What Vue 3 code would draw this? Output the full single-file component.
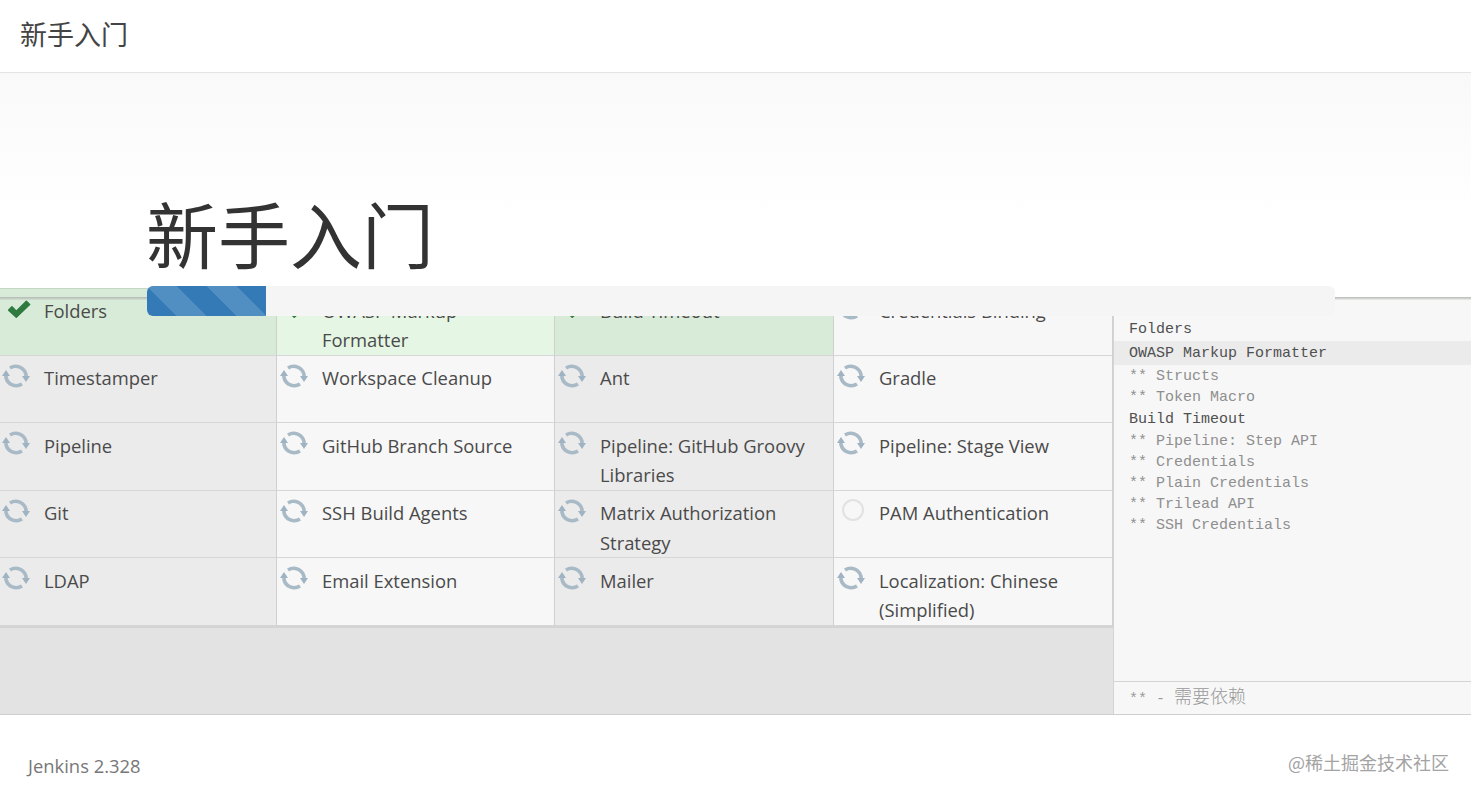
<template>
  <div class="page">
    <header class="top-bar">新手入门</header>
    <section class="hero">
      <h1>新手入门</h1>
    </section>

    <div class="install">
      <div class="plugin-pane">
        <div class="plugin-grid">
          <div
            v-for="(plugin, i) in plugins"
            :key="plugin.name"
            class="plugin"
            :class="[i % 2 ? 'plugin--even' : 'plugin--odd', plugin.state === 'done' ? 'plugin--done' : '']"
          >
            <span class="plugin-icon">
              <svg v-if="plugin.state === 'done'" viewBox="0 0 24 20" width="26" height="22">
                <path d="M2.5 11 L5.5 8 L9.5 12 L18.8 2.8 L21.8 5.8 L9.5 17.6 Z" fill="#2f7a3e" stroke="#2f7a3e" stroke-width="1.4" stroke-linejoin="round" />
              </svg>
              <svg v-else-if="plugin.state === 'loading'" viewBox="0 0 28 28" width="28" height="28">
                <g fill="none" stroke="#a9bac7" stroke-width="3.6">
                  <path d="M8 6 A10.5 10.5 0 0 1 24 12.5 L24 15" />
                  <path d="M20 22 A10.5 10.5 0 0 1 4 15.5 L4 13" />
                </g>
                <path d="M20 14 L28 14 L24 20 Z M0 14 L8 14 L4 8 Z" fill="#9fb3c3" />
              </svg>
              <span v-else class="pending-ring"></span>
            </span>
            <span class="plugin-name">{{ plugin.name }}</span>
          </div>
        </div>
      </div>

      <aside class="log">
        <div class="log-lines">
          <div
            v-for="line in logLines"
            :key="line.text"
            class="log-line"
            :class="{ 'log-line--dep': line.dep, 'log-line--active': line.active }"
          >{{ line.text }}</div>
        </div>
        <div class="log-legend">** - <span class="log-legend-cjk">需要依赖</span></div>
      </aside>

      <div class="top-shadow"></div>
      <div class="progress">
        <div class="progress-fill" :style="{ width: progress + 'px' }"></div>
      </div>
    </div>

    <footer class="footer">
      <span class="version">Jenkins 2.328</span>
      <span class="mark">@稀土掘金技术社区</span>
    </footer>
  </div>
</template>

<script setup>
const progress = 119;

const plugins = [
  { name: "Folders", state: "done" },
  { name: "OWASP Markup Formatter", state: "done" },
  { name: "Build Timeout", state: "done" },
  { name: "Credentials Binding", state: "loading" },
  { name: "Timestamper", state: "loading" },
  { name: "Workspace Cleanup", state: "loading" },
  { name: "Ant", state: "loading" },
  { name: "Gradle", state: "loading" },
  { name: "Pipeline", state: "loading" },
  { name: "GitHub Branch Source", state: "loading" },
  { name: "Pipeline: GitHub Groovy Libraries", state: "loading" },
  { name: "Pipeline: Stage View", state: "loading" },
  { name: "Git", state: "loading" },
  { name: "SSH Build Agents", state: "loading" },
  { name: "Matrix Authorization Strategy", state: "loading" },
  { name: "PAM Authentication", state: "pending" },
  { name: "LDAP", state: "loading" },
  { name: "Email Extension", state: "loading" },
  { name: "Mailer", state: "loading" },
  { name: "Localization: Chinese (Simplified)", state: "loading" },
];

const logLines = [
  { text: "Folders" },
  { text: "OWASP Markup Formatter", active: true },
  { text: "** Structs", dep: true },
  { text: "** Token Macro", dep: true },
  { text: "Build Timeout" },
  { text: "** Pipeline: Step API", dep: true },
  { text: "** Credentials", dep: true },
  { text: "** Plain Credentials", dep: true },
  { text: "** Trilead API", dep: true },
  { text: "** SSH Credentials", dep: true },
];
</script>

<style>
html,
body {
  margin: 0;
  overflow: hidden;
  background: #fff;
}
</style>

<style scoped>
.page {
  height: 795px;
  display: flex;
  flex-direction: column;
  font-family: "Open Sans", "Noto Sans CJK SC", sans-serif;
  color: #333;
}

.top-bar {
  height: 73px;
  box-sizing: border-box;
  padding: 0 20px 6px;
  display: flex;
  align-items: center;
  border-bottom: 1px solid #e4e4e4;
  font-family: "Noto Sans CJK SC", sans-serif;
  font-size: 27px;
  font-weight: 400;
  color: #444;
}

.hero {
  height: 215px;
  box-sizing: border-box;
  padding-left: 146px;
  background: linear-gradient(#f9f9f9, #fff 70%);
}

.hero h1 {
  margin: 0;
  padding-top: 106px;
  font-family: "Noto Sans CJK SC", sans-serif;
  font-size: 72px;
  line-height: 105px;
  font-weight: 400;
  color: #333;
}

.install {
  position: relative;
  flex: 1;
  min-height: 0;
  display: flex;
  background: #fff;
  border-bottom: 1px solid #cfcfcf;
}

.plugin-pane {
  width: 1113px;
  flex: none;
  background: #e3e3e3;
}

.plugin-grid {
  margin-left: -1px;
  display: grid;
  grid-template-columns: 278px 278px 279px 279px;
  grid-auto-rows: 67.5px;
  border-bottom: 2px solid #d4d4d4;
}

.plugin {
  box-sizing: border-box;
  display: flex;
  padding: 7.5px 6px 0 45px;
  position: relative;
  border-right: 1px solid #d0d0d0;
  border-bottom: 1px solid #d6d6d6;
  font-size: 18.4px;
  line-height: 29.5px;
  color: #4a4a4a;
}

.plugin--odd {
  background: #ebebeb;
}

.plugin--even {
  background: #f7f7f7;
}

.plugin--done {
  box-shadow: inset 0 1px 0 #c5d6c5;
}

.plugin--done.plugin--odd {
  background: #d8ead8;
}

.plugin--done.plugin--even {
  background: #e5f7e4;
}

.plugin-icon {
  position: absolute;
  left: 3px;
  top: 6px;
  width: 28px;
  height: 28px;
  display: flex;
  align-items: center;
  justify-content: center;
}

.plugin--done .plugin-icon {
  left: 6px;
  top: 7px;
}

.pending-ring {
  box-sizing: border-box;
  width: 22px;
  height: 22px;
  margin-left: 3px;
  margin-top: -2px;
  border: 2px solid #e2e2e2;
  border-radius: 50%;
}

.log {
  flex: 1;
  margin-top: 10px;
  display: flex;
  flex-direction: column;
  background: #f7f7f7;
  border-left: 1px solid #d4d4d4;
  font-family: "Liberation Mono", "Noto Sans CJK SC", monospace;
  font-size: 15px;
  line-height: 21px;
  color: #505050;
}

.log-lines {
  flex: 1;
  padding-top: 20px;
}

.log-line {
  padding-left: 15px;
  margin: 1px 0;
}

.log-line--dep {
  margin: 0;
  color: #8f8f8f;
}

.log-line--active {
  background: #ebebeb;
  height: 24px;
  line-height: 26px;
}

.log-legend {
  height: 33px;
  box-sizing: border-box;
  padding: 3px 0 0 15px;
  border-top: 1px solid #d4d4d4;
  line-height: 30px;
  color: #999;
}

.log-legend-cjk {
  font-family: "Noto Sans CJK SC", sans-serif;
  font-size: 18px;
  font-weight: 300;
  line-height: 1;
}

.top-shadow {
  position: absolute;
  left: 0;
  right: 0;
  top: 9px;
  height: 3px;
  background: linear-gradient(#b4b9b4, rgba(180, 185, 180, 0.15));
}

.progress {
  position: absolute;
  left: 147px;
  top: -2px;
  width: 1188px;
  height: 30px;
  border-radius: 6px;
  background: #f5f5f5;
  overflow: hidden;
}

.progress-fill {
  height: 100%;
  background-color: #337ab7;
  background-image: linear-gradient(
    45deg,
    rgba(255, 255, 255, 0.15) 25%,
    transparent 25%,
    transparent 50%,
    rgba(255, 255, 255, 0.15) 50%,
    rgba(255, 255, 255, 0.15) 75%,
    transparent 75%
  );
  background-size: 60px 60px;
}

.footer {
  height: 80px;
  flex: none;
  box-sizing: border-box;
  padding: 0 22px 0 28px;
  display: flex;
  justify-content: space-between;
  background: #fff;
}

.version {
  margin-top: 37px;
  font-size: 18.4px;
  line-height: 28px;
  color: #777;
}

.mark {
  margin-top: 34px;
  font-family: "Noto Sans CJK SC", sans-serif;
  font-size: 18px;
  line-height: 26px;
  color: #a3a3a3;
}
</style>
